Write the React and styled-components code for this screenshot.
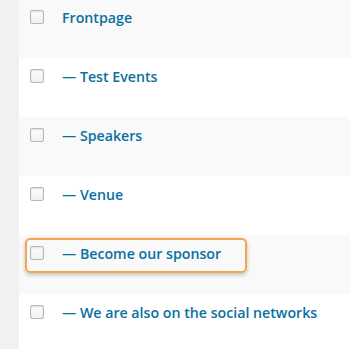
import React from 'react'
import styled, { createGlobalStyle } from 'styled-components'

const GlobalStyle = createGlobalStyle`
    html, body {
        margin: 0;
        padding: 0;
        background: #f1f1f1;
    }
    body {
        font-family: "Open Sans", "Liberation Sans", sans-serif;
    }
`;

const pages = [
    {title: 'Frontpage', depth: 0},
    {title: 'Test Events', depth: 1},
    {title: 'Speakers', depth: 1},
    {title: 'Venue', depth: 1},
    {title: 'Become our sponsor', depth: 1, highlight: true},
    {title: 'We are also on the social networks', depth: 1},
];

const App = () => {
    return (
        <Page>
            <GlobalStyle/>
            <Table>
                {pages.map((p, i) => (
                    <Row key={p.title} alt={i % 2 === 0}>
                        {p.highlight && <Highlight/>}
                        <Check type="checkbox"/>
                        <Title href="#">{p.depth ? '— ' : ''}{p.title}</Title>
                    </Row>
                ))}
            </Table>
        </Page>
    )
};

export default App

const Page = styled.div`
    width: 350px;
    height: 349px;
    overflow: hidden;
    background: #f1f1f1;
    padding-left: 19px;
    box-sizing: border-box;
`;

const Table = styled.div`
    margin-top: -1px;
    display: flex;
    flex-direction: column;
`;

const Row = styled.div`
    position: relative;
    box-sizing: border-box;
    height: 59px;
    padding: 11px 0 0 11px;
    display: flex;
    align-items: flex-start;
    gap: 18px;
    background: ${props => props.alt ? '#f9f9f9' : '#ffffff'};
`;

const Check = styled.input`
    appearance: none;
    -webkit-appearance: none;
    margin: 0;
    width: 14px;
    height: 14px;
    box-sizing: border-box;
    border: 1px solid #b4b9be;
    border-radius: 2px;
    background: linear-gradient(#fdfdfd, #f1f1f1);
    box-shadow: inset 0 1px 2px rgba(0, 0, 0, 0.12);
    flex: none;
    position: relative;
    z-index: 1;
`;

const Title = styled.a`
    position: relative;
    z-index: 1;
    margin-top: -1px;
    font-size: 14.2px;
    line-height: 18px;
    font-weight: 600;
    color: #0a70a0;
    text-decoration: none;
    white-space: nowrap;
`;

const Highlight = styled.div`
    position: absolute;
    left: 6px;
    top: 3px;
    width: 222px;
    height: 35px;
    box-sizing: border-box;
    border: 2px solid #f5a54a;
    border-radius: 5px;
    box-shadow: 0 2px 4px rgba(0, 0, 0, 0.22);
`;
